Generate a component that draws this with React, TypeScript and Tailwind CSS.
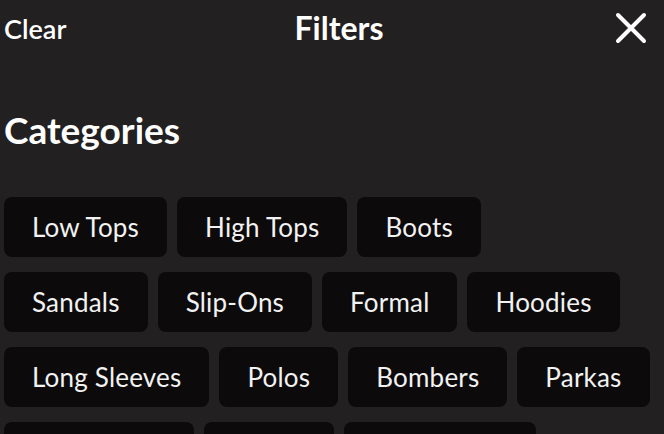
const categories = [
  ["Low Tops", "High Tops", "Boots"],
  ["Sandals", "Slip-Ons", "Formal", "Hoodies"],
  ["Long Sleeves", "Polos", "Bombers", "Parkas"],
  ["Sweatshirts", "Shorts", "Accessories"],
];

function CloseIcon() {
  return (
    <svg width="32" height="32" viewBox="0 0 32 32" fill="none">
      <path d="M3 3L29 29M29 3L3 29" stroke="currentColor" strokeWidth="4" strokeLinecap="round" />
    </svg>
  );
}

function Pill({ label }: { label: string }) {
  return (
    <button className="flex h-[60px] items-center rounded-lg bg-[#0c0a0b] px-7 text-[26px] leading-none tracking-[0.2px] text-[#f2f2f2]">
      {label}
    </button>
  );
}

export default function App() {
  return (
    <div className="h-[434px] w-[664px] overflow-hidden bg-[#222021] font-['Lato',sans-serif] text-white">
      <header className="relative flex h-14 items-center justify-between px-1">
        <button className="text-[27px] font-semibold leading-none">Clear</button>
        <h1 className="absolute left-[339px] -translate-x-1/2 text-[32px] font-bold leading-none">
          Filters
        </h1>
        <button className="mr-[13px] text-white">
          <CloseIcon />
        </button>
      </header>

      <section className="px-1">
        <h2 className="mt-[55px] text-[37px] font-bold leading-none">Categories</h2>

        <div className="mt-[49px] flex flex-col gap-[15px]">
          {categories.map((row, i) => (
            <div key={i} className="flex gap-2.5">
              {row.map((c) => (
                <Pill key={c} label={c} />
              ))}
            </div>
          ))}
        </div>
      </section>
    </div>
  );
}
